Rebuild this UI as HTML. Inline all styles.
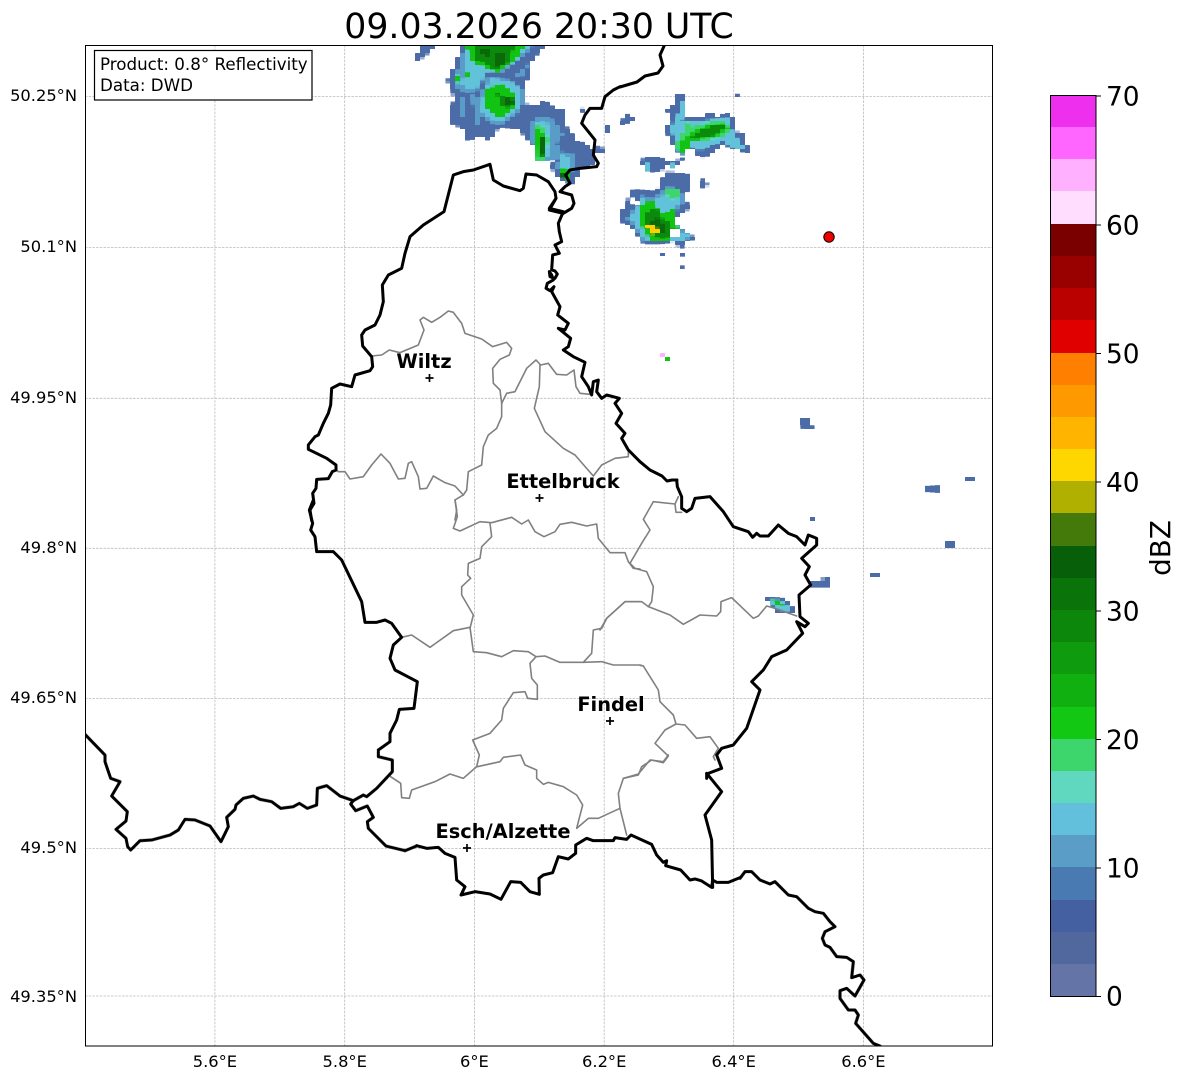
<!DOCTYPE html>
<html>
<head>
<meta charset="utf-8">
<style>
html,body{margin:0;padding:0;background:#fff}
svg{display:block;font-family:"DejaVu Sans",sans-serif}
.k,.g{fill:none;vector-effect:non-scaling-stroke;stroke-linejoin:round;stroke-linecap:round}
.k{stroke:#000;stroke-width:3}
.g{stroke:#808080;stroke-width:1.6}
.t{font-size:16.3px;fill:#000}
.i{font-size:16.7px;fill:#000}
.c{font-size:26.4px;fill:#000}
.b{font-size:19.4px;font-weight:bold;fill:#000}
.b1{fill:#4c6ca8}.b2{fill:#5a9cc8}.b3{fill:#62c2da}.b4{fill:#3dd66d}.b5{fill:#12c412}.b6{fill:#0c8a0c}.b7{fill:#0a6a0a}
.w{fill:#fff}
</style>
</head>
<body>
<svg width="1184" height="1081" viewBox="0 0 1184 1081" xmlns="http://www.w3.org/2000/svg">
<defs>
<clipPath id="ax"><rect x="85" y="45" width="907" height="1001"/></clipPath>
<filter id="px" filterUnits="userSpaceOnUse" x="85" y="45" width="907" height="1001" color-interpolation-filters="sRGB">
<feFlood x="87" y="46" width="1" height="2" flood-color="#000"/>
<feComposite x="85" y="45" width="5" height="4"/>
<feTile result="a"/>
<feComposite in="SourceGraphic" in2="a" operator="in"/>
<feMorphology operator="dilate" radius="2 1"/>
</filter>
</defs>
<rect width="1184" height="1081" fill="#fff"/>

<text x="539" y="38" text-anchor="middle" font-size="34.7" fill="#000">09.03.2026 20:30 UTC</text>

<!-- grid -->
<g stroke="#bbbbbb" stroke-width="0.8" stroke-dasharray="2.5 1.2">
<path d="M214.9 45V1046M344.7 45V1046M474.4 45V1046M604.2 45V1046M733.7 45V1046M863.4 45V1046"/>
<path d="M85 96.5H992M85 247.5H992M85 398.300H992M85 548.300H992M85 698.500H992M85 848.500H992M85 996H992"/>
</g>

<g clip-path="url(#ax)">
<!-- radar -->
<g filter="url(#px)">
<g transform="translate(400 40) scale(.33333)">
<polygon class="b1" points="70,15 110,15 75,50 45,68 40,60"/>
<polygon class="b1" points="185,15 435,15 395,65 390,110 370,130 372,180 385,195 410,195 430,180 465,205 490,205 500,260 530,300 550,310 585,330 580,370 545,390 520,430 490,425 460,400 455,375 470,345 450,350 405,320 350,265 300,260 270,300 250,295 240,275 230,295 190,300 195,270 155,250 150,225 160,180 155,135 140,125 170,60"/>
<polygon class="b1" points="545,203 556,208 549,216 541,212"/>
<polygon class="b1" points="615,258 632,255 625,280 609,280"/>
<polygon class="b1" points="593,320 616,325 606,342 591,336"/>
<polygon class="b2" points="215,165 235,170 240,250 225,255"/>
<polygon class="b2" points="175,170 190,170 200,230 185,230"/>
<polygon class="b2" points="340,110 385,70 375,105"/>
<polygon class="b2" points="195,15 400,15 360,60 300,100 260,100 235,150 200,160 165,140 170,100"/>
<polygon class="b3" points="195,15 390,15 350,60 295,92 260,95 232,140 205,150 185,130 195,90"/>
<polygon class="b2" points="265,110 330,120 370,150 370,190 350,225 300,255 260,245 235,215 240,170"/>
<polygon class="b3" points="270,115 330,125 362,150 362,190 345,218 300,245 265,235 245,212 248,170"/>
<polygon class="b2" points="400,235 450,230 490,280 470,310 490,340 530,345 530,390 490,400 465,385 480,355 440,360 405,335 390,280"/>
<polygon class="b3" points="405,250 440,245 455,290 445,350 415,355 400,300"/>
<polygon class="b3" points="480,345 515,350 510,385 485,380"/>
<polygon class="b5" points="195,15 375,15 345,65 290,98 215,65"/>
<polygon class="b5" points="255,145 310,130 350,165 345,205 300,235 255,200"/>
<polygon class="b4" points="400,255 435,260 445,300 435,360 410,360 410,300"/>
<polygon class="b5" points="475,385 500,380 515,420 495,425"/>
<polygon class="b5" points="195,95 215,92 205,115 192,112"/>
<polygon class="b5" points="170,105 180,105 170,135 160,135"/>
<polygon class="b6" points="225,15 345,15 325,70 285,88 230,60"/>
<polygon class="b5" points="410,265 440,285 435,350 412,355"/>
<polygon class="b6" points="290,160 350,175 335,205 300,200"/>
<polygon class="b7" points="245,25 275,25 270,50 245,45"/>
<polygon class="b7" points="285,40 320,40 315,75 285,85"/>
<polygon class="b7" points="315,170 345,185 330,200 312,190"/>
<polygon class="b7" points="420,285 436,295 428,350 418,345"/>
<polygon class="b7" points="482,398 500,400 497,418 485,415"/>
</g>
<g transform="translate(610 85) scale(.33333)">
<polygon class="b1" points="30,120 45,88 75,95 65,110"/>
<polygon class="b1" points="370,25 384,30 382,38 370,36"/>
<polygon class="b1" points="195,30 220,30 232,60 215,100 285,95 300,80 320,95 355,85 375,100 380,140 405,145 405,180 428,190 415,205 385,195 340,180 310,200 280,220 255,205 240,180 235,190 220,210 195,195 180,160 160,130 190,110 170,75 195,55"/>
<polygon class="b3" points="215,45 230,50 215,110 285,105 355,100 370,145 395,180 410,195 385,195 340,170 300,180 270,200 240,180 220,210 195,180 190,150 175,135 200,100"/>
<polygon class="b4" points="230,110 250,125 300,110 340,110 365,130 345,155 300,165 240,170 225,210 205,200 195,180 215,150"/>
<polygon class="b5" points="250,135 300,118 345,112 355,128 320,155 245,170 225,205 205,195 215,165"/>
<polygon class="b6" points="285,130 330,115 350,125 320,150 250,165 240,155"/>
<polygon class="b1" points="100,215 140,215 165,225 200,225 220,220 205,240 170,240 160,255 130,260 105,255 95,235"/>
<polygon class="b3" points="105,230 120,240 115,258 103,250"/>
<polygon class="b3" points="180,235 195,235 190,248 180,245"/>
<polygon class="b1" points="270,295 280,280 295,300 285,310 268,303"/>
<polygon class="b1" points="70,315 140,320 150,290 175,258 235,270 240,310 220,330 240,370 190,405 210,430 240,445 255,460 220,475 215,495 205,490 200,470 150,475 100,475 60,420 30,410 25,385 50,365 55,330"/>
<polygon class="b2" points="85,320 100,335 130,340 150,325 175,305 210,312 225,345 205,370 190,395 205,430 245,450 225,470 195,470 145,470 95,465 70,420 50,400 70,375 85,350"/>
<polygon class="b3" points="90,335 105,350 130,350 155,335 178,315 205,320 215,345 195,368 185,392 205,435 235,452 220,465 140,468 100,462 75,415 62,398 75,380 90,355"/>
<polygon class="b4" points="170,315 205,315 205,335 185,345 170,330"/>
<polygon class="b5" points="100,355 130,345 155,385 190,370 190,405 210,435 185,440 180,465 120,465 95,425 85,380"/>
<polygon class="b6" points="110,380 140,365 150,395 175,410 190,430 175,460 150,465 125,450 105,420"/>
<polygon class="b7" points="130,390 150,405 170,425 160,445 135,445 125,415"/>
<polygon fill="#ffd000" points="108,420 135,420 152,442 130,450"/>
<polygon class="w" points="70,335 85,355 75,365 65,350"/>
<polygon class="w" points="180,433 212,433 205,456 185,456"/>
<polygon class="b1" points="150,503 160,503 160,510 150,510"/>
<polygon class="b1" points="205,544 218,544 218,551 205,551"/>
<polygon class="b1" points="213,505 219,505 219,512 213,512"/>
</g>
<g transform="translate(600 480) scale(.33333)">
<polygon class="b1" points="495,350 560,358 572,382 590,380 590,390 570,400 530,398 515,375 495,358"/>
<polygon class="b3" points="512,358 545,360 570,380 570,392 540,392 515,372"/>
<polygon class="b5" points="515,358 550,370 550,380 520,375"/>
<polygon class="b1" points="628,117 642,117 642,123 628,123"/>
<polygon class="b1" points="635,304 665,302 687,306 687,320 635,320"/>
<polygon class="b1" points="668,294 687,294 687,300 668,300"/>
</g>
<polygon class="b1" points="801,419 811,419 813,430 803,430"/>
<polygon class="b1" points="925,487 940,486 939,492 926,491"/>
<polygon class="b1" points="964,479 973,476 973,480 965,482"/>
<polygon class="b1" points="945,542 953,541 953,547 946,547"/>
<polygon class="b1" points="809,518 815,518 815,522 809,522"/>
<polygon class="b1" points="869,574 878,574 878,578 869,578"/>
<polygon fill="#ffb0ff" points="660,353 665,353 665,357 660,357"/>
<polygon class="b5" points="665,356 670,356 670,360 665,360"/>
</g>

<!-- grey borders -->
<g transform="translate(300 160) scale(.33333)">
<polyline class="g" points="108,930 115,935 135,935 150,957 190,950 215,915 243,882 270,910 295,957 315,955 325,910 335,905 355,950 360,987 380,985 400,948 435,968 465,978 490,1005"/>
<polyline class="g" points="465,1080 470,1050 465,1020 490,1005 500,990 505,935 545,915 550,860 565,825 590,805 605,770 605,730 600,690 580,670 578,625 600,598 628,585 635,565 620,547 578,560 545,537 495,520 485,490 460,457 445,453 420,472 395,487 370,472 360,480 372,510 355,555 300,578 268,570 245,585 215,588"/>
<polyline class="g" points="605,730 620,700 645,695 680,625 708,600 722,615 745,610 770,643 800,645 822,630 828,680 840,700 870,703"/>
<polyline class="g" points="720,615 718,680 703,745 735,815 790,865 825,885 880,948 905,915 945,895 985,890 985,875"/>
</g>
<g transform="translate(300 500) scale(.33333)">
<polyline class="g" points="465,0 472,50 460,85 480,93 540,65 575,68 635,52 665,72 685,60 705,95 732,110 765,95 780,73 815,67 860,78 890,72 895,115 930,158 975,158 985,185 1000,205 1020,207"/>
<polyline class="g" points="570,70 575,110 545,140 540,175 505,190 503,225 512,235 485,260 485,285 520,345 510,385"/>
<polyline class="g" points="305,412 335,405 390,442 460,392 510,382 520,455 560,458 605,470 640,452 685,455 708,470 735,468 780,487 850,487 905,485 940,495 1020,495 1030,498"/>
<polyline class="g" points="850,487 875,460 880,390 905,385 920,355 975,305 1020,305"/>
<polyline class="g" points="708,470 690,490 695,535 712,555 712,598 683,595 675,575 640,578 610,625 605,660 570,700 518,720 538,765 530,800 490,835 450,822 405,845 335,870 328,895 305,893 302,850 272,830"/>
</g>
<g transform="translate(600 480) scale(.33333)">
<polyline class="g" points="90,250 105,265 140,275 160,320 155,365 145,380"/>
<polyline class="g" points="90,250 125,190 150,150 130,118 160,65 225,72 235,50"/>
<polyline class="g" points="225,72 228,97 245,97"/>
<polyline class="g" points="0,450 20,415 75,365 125,365 145,380 210,405 250,433 300,405 350,408 362,395 363,365 395,353 460,415 475,408 500,378 525,385 590,408"/>
<polyline class="g" points="120,556 130,558 175,630 180,665 220,705 228,732 255,735 290,775 330,770 355,805 340,830 345,840"/>
<polyline class="g" points="228,732 195,750 165,790 205,828 190,848 155,840 125,860 115,885 70,895"/>
</g>
<g transform="translate(400 750) scale(.33333)">
<polyline class="g" points="805,15 790,35 750,30 715,72 670,85 655,130 660,175 680,255"/>
<polyline class="g" points="660,175 595,205 565,205 530,235 548,165 530,135 490,110 445,97 430,103 410,85 410,60 375,45 362,15 310,22 300,35 232,50"/>
</g>

<!-- black borders -->
<g transform="translate(300 160) scale(.33333)">
<polyline class="k" points="35,1082 30,1050 42,1030 38,1000 48,985 50,958 85,956 97,935 108,930 108,915 80,895 25,868 25,855 45,830 55,825 70,790 85,760 92,735 95,685 120,672 155,680 165,645 210,632 218,620 215,590 188,558 185,525 195,510 225,495 240,465 250,425 247,375 265,345 305,325 315,280 330,230 370,195 432,155 460,45 490,35 520,30 570,13 580,60 610,78 660,92 670,85 678,42 710,45 745,65 765,95 768,115 748,145 790,155 775,190 778,215 785,245 765,255 778,280 758,285 755,330 765,333 772,342 765,355 750,350 748,335 755,345 760,360 742,370 738,385 750,392 762,380 755,395 780,440 773,465 805,490 795,510 775,505 812,535 805,560 790,570 820,590 855,607 845,650 865,680 875,705 880,665 895,660 890,695 905,715 920,705 958,715 945,730 965,760 948,790 975,820 965,835 985,870 1020,905"/>
</g>
<g transform="translate(400 40) scale(.33333)">
<polyline class="k" points="468,475 448,510 490,520 515,505 522,490 515,465 480,455 495,440 510,430 497,405 510,390 540,385 590,380 595,370 580,345 585,300 545,250 555,225 570,205 605,205 615,170 640,150 660,140"/>
</g>
<polyline class="k" points="620,87 637,82 645,76 658,73 663,66 660,55 665,44"/>
<polyline class="k" points="640,461.7 650,470 662,476 667,481 672,480 677,480"/>
<g transform="translate(600 480) scale(.33333)">
<polyline class="k" points="230,0 232,20 245,50 245,85 260,95 275,85 285,55 330,50 370,95 400,140 445,155 458,172 470,160 480,168 505,168 535,135 565,160 590,170 615,195 625,165 650,175 650,195 605,235 628,260 615,285 632,315 597,345 600,410 625,430 615,440 590,425 608,460 560,510 515,530 490,570 455,605 480,630 440,745 400,795 365,805 350,825 365,865 320,882 320,895"/>
</g>
<g transform="translate(400 750) scale(.33333)">
<polyline class="k" points="920,70 965,125 915,195 935,270 938,412"/>
<polyline class="k" points="50,287 80,295 115,292 135,310 165,322 170,390 195,410 183,435 225,425 270,432 303,448 332,395 362,397 390,425 418,433 417,385 430,375 458,368 475,320 505,327 527,310 527,285 560,265 580,272 640,272 645,263 680,268 693,255 755,283 770,315 790,337 800,332 797,347 842,360 870,390 885,387 905,393 935,412 938,390 950,397 985,397 1020,383"/>
</g>
<g transform="translate(690 860) scale(.33333)">
<polyline class="k" points="150,55 165,35 185,35 210,60 240,72 255,65 295,105 320,110 355,145 375,155 400,160 420,185 435,200 405,215 397,235 405,255 420,262 440,290 470,292 490,305 485,353 510,345 522,360 495,408 470,385 450,392 450,415 475,450 495,450 505,465 497,490 550,550 570,558 580,575"/>
</g>
<g transform="translate(80 720) scale(.33333)">
<polyline class="k" points="14,42 75,105 75,125 92,175 120,185 95,228 142,275 138,303 108,328 138,355 143,380 152,390 180,362 215,360 270,345 295,330 315,298 345,300 390,318 423,365 445,320 440,292 465,268 468,255 490,235 520,228 540,238 575,245 602,265 640,260 658,250 682,265 710,255 712,205 740,197 780,228 820,242 812,252 827,272 862,258 880,292 862,305 865,325 918,378 975,392 1010,378"/>
<polyline class="k" points="820,242 850,225 860,230 890,205 937,155 937,120 895,110 895,95"/>
</g>
<g transform="translate(300 500) scale(.33333)">
<polyline class="k" points="40,0 28,30 38,70 32,90 45,110 50,155 100,155 125,180 185,305 195,367 230,367 255,360 275,370 305,412 280,435 270,475 285,510 352,545 342,625 298,628 290,660 270,700 270,725 235,750"/>
</g>
</g>

<!-- cities -->
<path d="M425.5 378H433.5M429.5 374V382M535.5 498H543.5M539.5 494V502M606 721H614M610 717V725M463 848H471M467 844V852" stroke="#000" stroke-width="1.7" fill="none"/>
<text class="b" x="424" y="368" text-anchor="middle">Wiltz</text>
<text class="b" x="563" y="488" text-anchor="middle">Ettelbruck</text>
<text class="b" x="611" y="711" text-anchor="middle">Findel</text>
<text class="b" x="503" y="838" text-anchor="middle">Esch/Alzette</text>

<!-- red dot -->
<circle cx="829" cy="237" r="5.2" fill="#ee0000" stroke="#000" stroke-width="1"/>

<!-- info box -->
<rect x="94.500" y="50.500" width="217.500" height="49.500" fill="#fff" stroke="#000" stroke-width="1.2"/>
<text x="100" y="70" class="i">Product: 0.8° Reflectivity</text>
<text x="100" y="91" class="i">Data: DWD</text>

<!-- axes frame -->
<rect x="85.500" y="45.500" width="907" height="1000.500" fill="none" stroke="#000" stroke-width="1"/>

<!-- tick labels -->
<g text-anchor="end">
<text x="77" y="101" class="t">50.25°N</text>
<text x="77" y="252" class="t">50.1°N</text>
<text x="77" y="403" class="t">49.95°N</text>
<text x="77" y="553" class="t">49.8°N</text>
<text x="77" y="703" class="t">49.65°N</text>
<text x="77" y="853" class="t">49.5°N</text>
<text x="77" y="1002" class="t">49.35°N</text>
</g>
<g text-anchor="middle">
<text x="214.9" y="1067" class="t">5.6°E</text>
<text x="344.7" y="1067" class="t">5.8°E</text>
<text x="474.4" y="1067" class="t">6°E</text>
<text x="604.2" y="1067" class="t">6.2°E</text>
<text x="733.7" y="1067" class="t">6.4°E</text>
<text x="863.4" y="1067" class="t">6.6°E</text>
</g>

<!-- colorbar -->
<g shape-rendering="crispEdges">
<rect x="1051" y="96" width="45" height="32" fill="#ee30ee"/>
<rect x="1051" y="127" width="45" height="33" fill="#ff66ff"/>
<rect x="1051" y="159" width="45" height="33" fill="#ffb0ff"/>
<rect x="1051" y="191" width="45" height="33" fill="#ffddff"/>
<rect x="1051" y="224" width="45" height="32" fill="#7a0000"/>
<rect x="1051" y="256" width="45" height="32" fill="#990000"/>
<rect x="1051" y="288" width="45" height="32" fill="#bb0000"/>
<rect x="1051" y="320" width="45" height="33" fill="#e00000"/>
<rect x="1051" y="353" width="45" height="32" fill="#ff8000"/>
<rect x="1051" y="385" width="45" height="32" fill="#ff9900"/>
<rect x="1051" y="417" width="45" height="32" fill="#ffb400"/>
<rect x="1051" y="449" width="45" height="32" fill="#ffd700"/>
<rect x="1051" y="481" width="45" height="32" fill="#b0b000"/>
<rect x="1051" y="513" width="45" height="33" fill="#447a0a"/>
<rect x="1051" y="546" width="45" height="32" fill="#085f0a"/>
<rect x="1051" y="578" width="45" height="32" fill="#0a730a"/>
<rect x="1051" y="610" width="45" height="32" fill="#0c870c"/>
<rect x="1051" y="642" width="45" height="32" fill="#0e9b0e"/>
<rect x="1051" y="674" width="45" height="33" fill="#10b010"/>
<rect x="1051" y="707" width="45" height="32" fill="#12c812"/>
<rect x="1051" y="739" width="45" height="32" fill="#3dd66d"/>
<rect x="1051" y="771" width="45" height="32" fill="#60d8c0"/>
<rect x="1051" y="803" width="45" height="32" fill="#62c0dc"/>
<rect x="1051" y="835" width="45" height="32" fill="#5a9ec8"/>
<rect x="1051" y="867" width="45" height="33" fill="#4a7ab2"/>
<rect x="1051" y="900" width="45" height="32" fill="#4460a0"/>
<rect x="1051" y="932" width="45" height="32" fill="#50689e"/>
<rect x="1051" y="964" width="45" height="33" fill="#6474a6"/>
</g>
<rect x="1050.500" y="95.500" width="45.500" height="901" fill="none" stroke="#000" stroke-width="1"/>
<path d="M1096 96H1101M1096 225H1101M1096 353.500H1101M1096 482H1101M1096 611H1101M1096 739.500H1101M1096 868H1101M1096 996.500H1101" stroke="#000" stroke-width="1"/>
<g>
<text x="1106" y="105.500" class="c">70</text>
<text x="1106" y="234.500" class="c">60</text>
<text x="1106" y="363" class="c">50</text>
<text x="1106" y="491.500" class="c">40</text>
<text x="1106" y="620.500" class="c">30</text>
<text x="1106" y="749" class="c">20</text>
<text x="1106" y="877.500" class="c">10</text>
<text x="1106" y="1005.500" class="c">0</text>
</g>
<text font-size="27.8" fill="#000" transform="translate(1170 548) rotate(-90)" text-anchor="middle">dBZ</text>
</svg>
</body>
</html>
